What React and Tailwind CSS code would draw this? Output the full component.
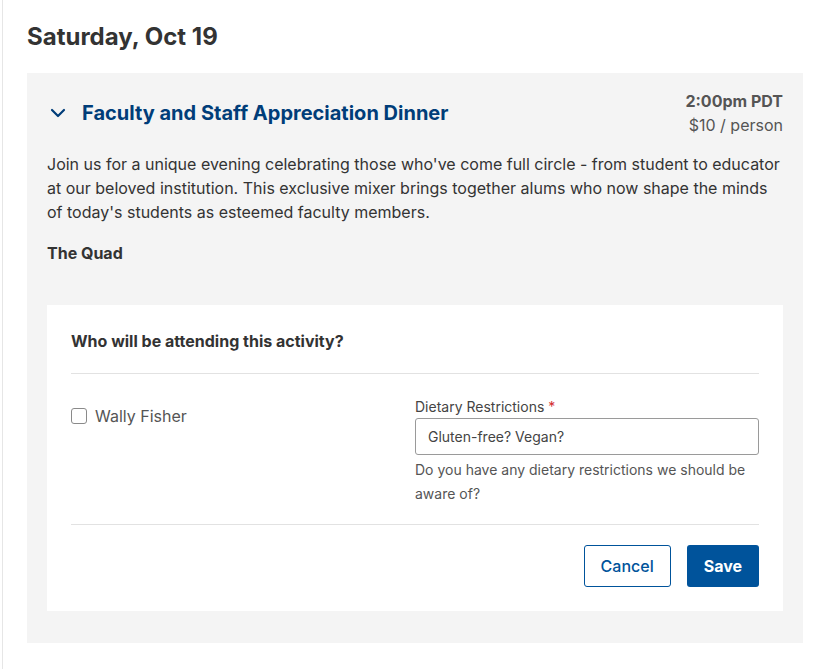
import { useState } from 'react';

const App = () => {
    const [checked, setChecked] = useState(false);
    const [diet, setDiet] = useState('');

    return (
        <div className="min-h-[669px] bg-white pl-[2px]" style={{ fontFamily: 'Inter, "Noto Sans", sans-serif' }}>
            <div className="min-h-[669px] border-l border-[#e6e6e6] pl-[24px] pr-[22px] pt-[22px] text-[#333333]">
                {/* Day heading */}
                <h2 className="text-[24px] font-bold leading-[30px] text-[#333333]">Saturday, Oct 19</h2>

                {/* Activity panel */}
                <div className="mt-[21px] bg-[#f4f4f4] px-[20px] pt-[16px] pb-[32px]">
                    <div className="flex items-start justify-between">
                        <div className="flex items-center gap-[14px] pt-[10px]">
                            <svg width="20" height="20" viewBox="0 0 20 20" className="ml-[1px] text-[#003d79]">
                                <path d="M4 7l6 6 6-6" fill="none" stroke="currentColor" strokeWidth="2.2" strokeLinecap="round" strokeLinejoin="round" />
                            </svg>
                            <h3 className="text-[20px] font-bold leading-[28px] text-[#003d79]">Faculty and Staff Appreciation Dinner</h3>
                        </div>
                        <div className="text-right text-[16px] leading-[24px]">
                            <div className="font-bold text-[#555555]">2:00pm PDT</div>
                            <div className="text-[#555555]">$10 / person</div>
                        </div>
                    </div>

                    <p className="mt-[15px] text-[16px] leading-[24px] text-[#333333]">
                        Join us for a unique evening celebrating those who've come full circle - from student to educator at our beloved institution. This exclusive mixer brings together alums who now shape the minds of today's students as esteemed faculty members.
                    </p>
                    <p className="mt-[17px] text-[16px] font-bold leading-[24px] text-[#333333]">The Quad</p>

                    {/* Attendance form */}
                    <div className="mt-[40px] bg-white px-[24px] pt-[24px] pb-[24px]">
                        <h4 className="text-[16px] font-bold leading-[24px] text-[#333333]">Who will be attending this activity?</h4>
                        <div className="mt-[20px] border-t border-[#e2e2e2]"></div>

                        <div className="grid grid-cols-2 pt-[24px] pb-[18px]">
                            <label className="flex items-center gap-[8px] pt-[3px] h-[24px] mt-[4px] cursor-pointer self-start">
                                <input
                                    type="checkbox"
                                    checked={checked}
                                    onChange={e => setChecked(e.target.checked)}
                                    className="h-[16px] w-[16px] appearance-none rounded-[3px] border border-[#8a8a8a] bg-white checked:bg-[#00539b]"
                                />
                                <span className="text-[16px] text-[#555555]">Wally Fisher</span>
                            </label>
                            <div>
                                <div className="text-[14px] leading-[18px] text-[#444444]">
                                    Dietary Restrictions <span className="text-[#d32f2f]">*</span>
                                </div>
                                <input
                                    type="text"
                                    value={diet}
                                    onChange={e => setDiet(e.target.value)}
                                    placeholder="Gluten-free? Vegan?"
                                    className="mt-[2px] h-[37px] w-full rounded-[3px] border border-[#9a9a9a] px-[12px] text-[14px] text-[#333333] placeholder:text-[#444444] outline-none"
                                />
                                <p className="mt-[3px] text-[14px] leading-[24px] text-[#555555]">
                                    Do you have any dietary restrictions we should be aware of?
                                </p>
                            </div>
                        </div>

                        <div className="border-t border-[#e2e2e2]"></div>
                        <div className="flex justify-end gap-[16px] pt-[20px]">
                            <button className="h-[42px] rounded-[3px] border border-[#00539b] bg-white px-[16px] text-[16px] font-medium text-[#00539b]">
                                Cancel
                            </button>
                            <button className="h-[42px] rounded-[3px] bg-[#00539b] px-[17px] text-[16px] font-bold text-white">
                                Save
                            </button>
                        </div>
                    </div>
                </div>
            </div>
        </div>
    );
};

export default App;
